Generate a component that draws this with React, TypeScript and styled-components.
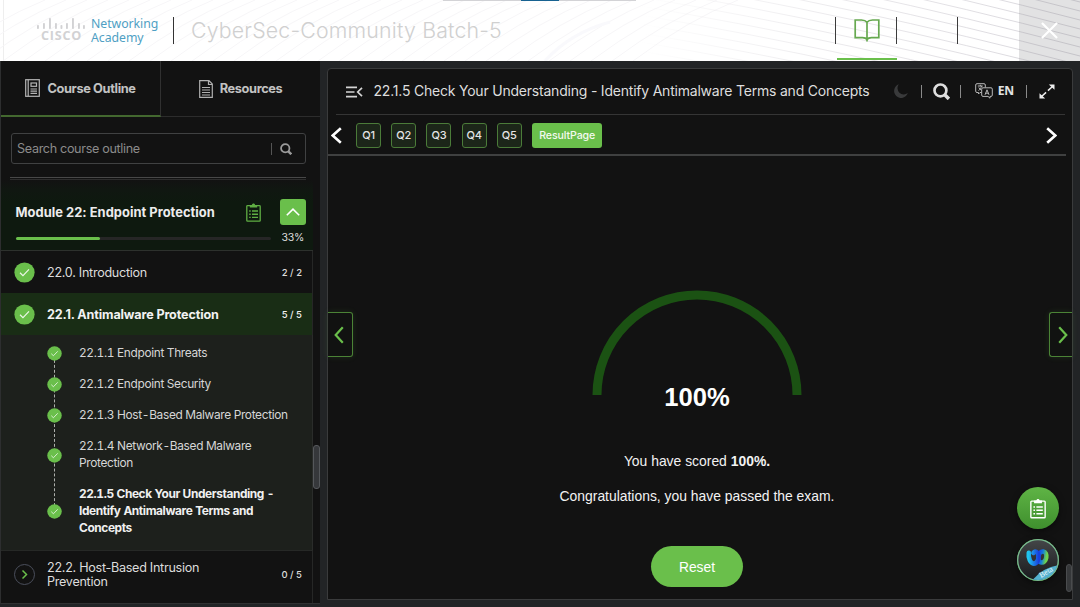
import React from 'react';
import styled, { createGlobalStyle } from 'styled-components';

const Global = createGlobalStyle`
  *, *::before, *::after { box-sizing: border-box; }
  body { margin: 0; background: #222426; overflow: hidden; }
  button { font: inherit; color: inherit; background: none; border: 0; padding: 0; margin: 0; }
  svg { display: block; flex: none; }
`;

const inter = `Inter, "Liberation Sans", sans-serif`;
const arial = `"Liberation Sans", Arial, sans-serif`;
const green = '#6abf4b';

const Page = styled.div`
  width: 1080px;
  height: 607px;
  display: flex;
  flex-direction: column;
  background: #222426;
  color: #e6e6e6;
  font-family: ${inter};
  overflow: hidden;
`;

/* ---------- header ---------- */
const Header = styled.header`
  position: relative;
  height: 61px;
  flex: none;
  display: flex;
  background: #fff;
`;
const Waves = styled.svg`
  position: absolute;
  inset: 0;
`;
const Brand = styled.div`
  position: relative;
  display: flex;
  align-items: center;
  width: 174px;
  height: 27px;
  margin-top: 17px;
  padding-left: 37px;
  border-right: 1px solid #333;
`;
const CiscoMark = styled.div`
  width: 48px;
  margin-right: 6px;
  display: flex;
  flex-direction: column;
`;
const CiscoWord = styled.span`
  font: 700 12.6px/12px "Open Sans", sans-serif;
  letter-spacing: 0.8px;
  color: #d2d2d4;
  padding-left: 4px;
  height: 13px;
`;
const Academy = styled.div`
  font: 400 12.3px/14px "Noto Sans", sans-serif;
  letter-spacing: -0.05px;
  color: #4f9fc4;
  white-space: pre;
`;
const CourseName = styled.h1`
  position: relative;
  margin: 16px 0 0 17px;
  font: 300 21.3px/28px ${inter};
  letter-spacing: 0.19px;
  color: #d0d0d0;
  flex: 1;
  white-space: nowrap;
`;
const HeaderSlot = styled.div<{ $active?: boolean }>`
  position: relative;
  width: 61px;
  display: flex;
  justify-content: center;
  padding-top: 19px;
  &::before {
    content: '';
    position: absolute;
    left: -1px;
    top: 17px;
    width: 1px;
    height: 27px;
    background: #3c3c3c;
  }
  &::after {
    content: '';
    position: absolute;
    left: 1px;
    bottom: 1px;
    width: 60px;
    height: 2px;
    background: ${p => (p.$active ? green : 'transparent')};
  }
`;
const CloseButton = styled.button`
  position: relative;
  width: 61px;
  display: flex;
  align-items: center;
  justify-content: center;
  background: rgba(150, 150, 156, 0.28);
`;
const LoadBar = styled.div`
  position: absolute;
  left: 443px;
  top: 0;
  width: 193px;
  height: 1px;
  background: #d3d3d6;
  &::after {
    content: '';
    display: block;
    margin-left: 78px;
    width: 38px;
    height: 1px;
    background: #176291;
  }
`;

/* ---------- sidebar ---------- */
const Body = styled.div`
  flex: 1;
  display: flex;
  min-height: 0;
`;
const Sidebar = styled.aside`
  position: relative;
  width: 320px;
  height: 543px;
  display: flex;
  flex-direction: column;
  background: #121212;
  border-left: 1px solid #2d2e2f;
  border-bottom: 1px solid #303132;
`;
const Tabs = styled.div`
  display: flex;
  height: 56px;
  flex: none;
`;
const Tab = styled.button<{ $active?: boolean }>`
  width: ${p => (p.$active ? 160 : 159)}px;
  display: flex;
  align-items: center;
  justify-content: center;
  gap: 7px;
  font-size: 12.8px;
  font-weight: 700;
  letter-spacing: -0.37px;
  color: #c2c2c2;
  border-bottom: ${p => (p.$active ? '2px solid #43682f' : '1px solid #2c2c2c')};
  border-right: ${p => (p.$active ? '1px solid #303030' : '0')};
`;
const SearchBox = styled.label`
  margin: 16px 14px 0 10px;
  height: 31px;
  flex: none;
  border: 1px solid #404142;
  border-radius: 3px;
  display: flex;
  align-items: center;
  padding: 0 13px 0 5px;
  font-size: 12.6px;
  letter-spacing: -0.33px;
  color: #8b8b8b;
`;
const SearchHint = styled.span`
  flex: 1;
`;
const SearchRule = styled.i`
  width: 1px;
  height: 12px;
  background: #555;
  margin-right: 8px;
`;
const DoubleRule = styled.div`
  margin: 13px 14px 0 9px;
  height: 3px;
  flex: none;
  border-top: 1px solid #484848;
  border-bottom: 1px solid #2d2d2d;
`;
const ModuleHead = styled.div`
  height: 71px;
  margin-right: 7px;
  flex: none;
  background: linear-gradient(#121212, #101711 10px, #0e190f 22px);
  border-bottom: 1px solid #2d312d;
  padding: 19px 7px 0 15px;
`;
const ModuleTitle = styled.div`
  display: flex;
  align-items: center;
  height: 26px;
  font-size: 12.9px;
  font-weight: 700;
  letter-spacing: 0.03px;
  color: #ececec;
`;
const Grow = styled.span`
  flex: 1;
  margin-left: -0.5px;
  white-space: nowrap;
`;
const Collapse = styled.button`
  width: 26px;
  height: 26px;
  margin-left: 19px;
  border-radius: 3px;
  background: ${green};
  display: flex;
  align-items: center;
  justify-content: center;
`;
const ProgressRow = styled.div`
  display: flex;
  align-items: center;
  height: 25px;
  justify-content: space-between;
  padding-right: 2px;
  font-size: 10.5px;
  letter-spacing: -0.3px;
  color: #dedede;
`;
const Track = styled.div`
  width: 255px;
  height: 3px;
  margin-top: 1px;
  border-radius: 2px;
  background: #262626;
  &::before {
    content: '';
    display: block;
    width: 33%;
    height: 100%;
    border-radius: 2px;
    background: ${green};
  }
`;
const Section = styled.div<{ $active?: boolean; $tall?: boolean }>`
  height: ${p => (p.$tall ? 52 : 42)}px;
  flex: none;
  margin-right: 7px;
  display: flex;
  align-items: center;
  padding: ${p => (p.$tall ? '0 10px 5px 13px' : '1px 10px 0 13px')};
  background: ${p => (p.$active ? '#192d15' : '#121212')};
  border-right: 1px solid #262726;
  font-size: 12.6px;
  line-height: 14px;
  font-weight: ${p => (p.$active ? 700 : 400)};
  letter-spacing: ${p => (p.$active ? -0.14 : -0.28)}px;
  color: ${p => (p.$active ? '#f2f2f2' : '#dcdcdc')};
`;
const SectionName = styled.span`
  flex: 1;
  margin-left: 12px;
  white-space: pre;
`;
const Count = styled.span`
  font-size: 9.5px;
  font-weight: 500;
  letter-spacing: 0;
`;
const Topics = styled.div`
  position: relative;
  height: 216px;
  flex: none;
  margin-right: 7px;
  background: #1d201c;
  border-right: 1px solid #2a2c2a;
  border-bottom: 1px solid #262826;
  padding: 3px 0 0 46px;
  &::before {
    content: '';
    position: absolute;
    left: 53px;
    top: 20px;
    height: 156px;
    border-left: 1px dashed #aeb0ac;
  }
`;
const Topic = styled.div<{ $lines?: number; $active?: boolean }>`
  position: relative;
  display: flex;
  align-items: center;
  height: ${p => 14 + 17 * (p.$lines || 1)}px;
  gap: 17px;
  font-size: 11.9px;
  line-height: 17px;
  font-weight: ${p => (p.$active ? 700 : 400)};
  letter-spacing: ${p => (p.$active ? -0.4 : -0.34)}px;
  font-variant-numeric: tabular-nums;
  color: ${p => (p.$active ? '#f0f0f0' : '#d6d6d6')};
  white-space: pre;
`;
const TopicName = styled.span`
  margin-top: -2px;
`;
const SideThumb = styled.div`
  position: absolute;
  right: 0;
  top: 384px;
  width: 7px;
  height: 44px;
  border-radius: 3px;
  background: #36383b;
  border: 1px solid #55585b;
`;

/* ---------- main panel ---------- */
const Panel = styled.main`
  position: relative;
  width: 746px;
  height: 532px;
  margin: 7px 0 0 7px;
  background: #121212;
  border: 1px solid #3a3b3c;
  border-radius: 4px 4px 0 0;
`;
const TitleRow = styled.div`
  display: flex;
  align-items: center;
  height: 46px;
  margin: 0 7px 0 8px;
  padding-left: 10px;
  padding-right: 10px;
  border-bottom: 1px solid #353535;
`;
const TopicTitle = styled.h2`
  margin: -2px 0 0 10.5px;
  flex: 1;
  font: 400 14px/20px ${inter};
  letter-spacing: -0.21px;
  color: #dedede;
  white-space: nowrap;
`;
const Pipe = styled.i<{ $before?: number; $after: number }>`
  width: 1px;
  height: 13px;
  margin: 0 ${p => p.$after}px 0 ${p => p.$before || 0}px;
  background: #8a8a8a;
`;
const Tools = styled.div`
  display: flex;
  align-items: center;
  margin-top: -1px;
`;
const Lang = styled.span`
  font: 700 12.2px/16px "Open Sans", sans-serif;
  letter-spacing: -0.2px;
  color: #e2e2e2;
  margin: 0 12px 0 5px;
`;
const Questions = styled.div`
  display: flex;
  align-items: center;
  height: 41px;
  margin-right: 6px;
  padding: 1px 9px 0 3px;
  border-bottom: 2px solid #3f4040;
`;
const Pills = styled.div`
  flex: 1;
  display: flex;
  gap: 10.2px;
  margin-left: 14px;
`;
const Question = styled.button`
  width: 25px;
  height: 25px;
  border: 1px solid #4b7b39;
  border-radius: 3px;
  background: #1c2619;
  font: 500 11px/23px ${inter};
  letter-spacing: -0.2px;
  color: #e4e4e4;
`;
const ResultTab = styled.button`
  width: 70.5px;
  height: 25px;
  border-radius: 3px;
  background: ${green};
  font: 500 10.6px/25px ${inter};
  letter-spacing: -0.1px;
  color: #f3faef;
`;
const Result = styled.section`
  display: flex;
  flex-direction: column;
  align-items: center;
  margin-right: 6px;
  padding-top: 134px;
  font-family: ${arial};
  color: #f2f2f2;
`;
const Score = styled.div`
  margin-top: -13px;
  font-weight: 700;
  font-size: 25.6px;
  line-height: 30px;
  color: #fff;
`;
const Lines = styled.div`
  margin-top: 39px;
  text-align: center;
`;
const Line = styled.p`
  margin: 0;
  height: 35px;
  font-size: 13.9px;
  line-height: 20px;
`;
const Reset = styled.button`
  margin-top: 25px;
  width: 92px;
  height: 41px;
  border-radius: 21px;
  background: ${green};
  font: 400 13.8px/43px ${arial};
  color: #fff;
`;
const SideNav = styled.button<{ $side: 'left' | 'right' }>`
  position: absolute;
  top: 243px;
  ${p => p.$side}: 0;
  width: ${p => (p.$side === 'left' ? 25 : 23)}px;
  height: 45px;
  display: flex;
  align-items: center;
  justify-content: center;
  padding-left: ${p => (p.$side === 'left' ? 0 : 3)}px;
  padding-right: ${p => (p.$side === 'left' ? 3 : 0)}px;
  background: #111211;
  border: 1.5px solid #4b8336;
  border-${p => p.$side}: 0;
  border-radius: ${p => (p.$side === 'left' ? '0 3px 3px 0' : '3px 0 0 3px')};
  box-shadow: 0 0 6px rgba(106, 191, 75, 0.14);
`;
const Floating = styled.div`
  position: absolute;
  right: 13px;
  top: 418px;
  display: flex;
  flex-direction: column;
  gap: 10px;
`;
const Fab = styled.button`
  width: 42px;
  height: 42px;
  border-radius: 50%;
  display: flex;
  align-items: center;
  justify-content: center;
  background: linear-gradient(#5fb445, #3f8f2e);
  box-shadow: 0 2px 6px rgba(0, 0, 0, 0.5);
`;
const PanelThumb = styled.div`
  position: absolute;
  right: 0;
  top: 495px;
  width: 6px;
  height: 28px;
  border-radius: 3px;
  background: #36383a;
  border: 1px solid #4a4c4e;
`;

const Check = ({ size }: { size: number }) => (
  <svg width={size} height={size} viewBox="0 0 22 22">
    <circle cx="11" cy="11" r="10.6" fill={green} />
    <path d="M6.3 11.3l3.1 3 6.3-6.5" fill="none" stroke="#eef8ea" strokeWidth="1.2" />
  </svg>
);

const Chevron = ({ w, h, dir, width = 2, color = '#fff' }: { w: number; h: number; dir: 'left' | 'right'; width?: number; color?: string }) => (
  <svg width={w} height={h} viewBox={`0 0 ${w} ${h}`}>
    <path
      d={dir === 'left' ? `M${w - 1.2} 1.2L1.7 ${h / 2}L${w - 1.2} ${h - 1.2}` : `M1.2 1.2L${w - 1.7} ${h / 2}L1.2 ${h - 1.2}`}
      fill="none"
      stroke={color}
      strokeWidth={width}
    />
  </svg>
);

const Clipboard = ({ w, h, color }: { w: number; h: number; color: string }) => (
  <svg width={w} height={h} viewBox="0 0 15 19" fill="none" stroke={color}>
    <rect x="0.8" y="2.6" width="13.4" height="15.6" rx="0.8" strokeWidth="1.3" />
    <path d="M3.8 4.6V2h2.1c.2-2 3-2 3.2 0h2.1v2.6z" fill={color} stroke="none" />
    <path d="M3.2 8h1.5M3.2 11.2h1.5M3.2 14.4h1.5M6 8h6M6 11.2h6M6 14.4h6" strokeWidth="1.4" />
  </svg>
);

const Magnifier = ({ size, color, width }: { size: number; color: string; width: number }) => (
  <svg width={size} height={size} viewBox="0 0 16 16" fill="none" stroke={color}>
    <circle cx="7" cy="7" r="5.6" strokeWidth={width} />
    <path d="M10.8 10.8L15 15" strokeWidth={width + 0.8} />
  </svg>
);

const ciscoBars = [[0, 7, 4], [6, 5, 6], [12, 0, 11], [18, 5, 6], [23.5, 7, 4], [29, 5, 6], [35, 0, 11], [41, 5, 6], [46, 7, 4]];

const topics = [
  { name: '22.1.1 Endpoint Threats' },
  { name: '22.1.2 Endpoint Security' },
  { name: '22.1.3 Host-Based Malware Protection' },
  { name: '22.1.4 Network-Based Malware\nProtection', lines: 2 },
  { name: '22.1.5 Check Your Understanding -\nIdentify Antimalware Terms and\nConcepts', lines: 3, active: true },
];

export default function App() {
  return (
    <Page>
      <Global />
      <Header>
        <Waves width="1080" height="61" fill="none">
          <defs>
            <linearGradient id="fade" gradientUnits="userSpaceOnUse" x1="640" x2="1080" y1="0" y2="0">
              <stop stopColor="#e2e0e4" stopOpacity="0" />
              <stop offset=".45" stopColor="#e2e0e4" stopOpacity="0.7" />
              <stop offset="1" stopColor="#d6d4da" />
            </linearGradient>
          </defs>
          <path d="M3.5 0V61" stroke="#eee" />
          {Array.from({ length: 34 }, (_, i) => (
            <path key={i} d={`M${i * 21 - 60} 61Q${i * 21 - 5} 20 ${i * 21 + 45} 0`} stroke="#f7f6f8" />
          ))}
          {Array.from({ length: 28 }, (_, i) => (
            <path key={i} d={`M640 ${i * 9 - 120}Q850 ${i * 9 - 85} 1080 ${i * 9 - 25}`} stroke="url(#fade)" />
          ))}
          <path d="M545 61Q570 33 610 22" stroke="#f9f9fc" strokeWidth="3" />
        </Waves>
        <LoadBar />
        <Brand>
          <CiscoMark>
            <svg width="48" height="12">
              {ciscoBars.map(([x, y, h]) => (
                <rect key={x} x={x} y={y} width="1.9" height={h} rx="0.8" fill="#d2d2d4" />
              ))}
            </svg>
            <CiscoWord>CISCO</CiscoWord>
          </CiscoMark>
          <Academy>{'Networking\nAcademy'}</Academy>
        </Brand>
        <CourseName>CyberSec-Community Batch-5</CourseName>
        <HeaderSlot $active>
          <svg width="26" height="23" viewBox="0 0 26 23" fill="none" stroke="#67a950" strokeWidth="1.7">
            <path d="M13 3.2C11.4 1.2 9.2 1 7.5 1H1.2v17.6h7.3c2 0 3.6.5 4.5 2 .9-1.5 2.5-2 4.5-2h7.3V1h-6.3C16.8 1 14.6 1.2 13 3.2zV22.5" />
          </svg>
        </HeaderSlot>
        <HeaderSlot />
        <HeaderSlot />
        <CloseButton>
          <svg width="17" height="17" viewBox="0 0 18 18" stroke="#fff" strokeWidth="2.3">
            <path d="M1 1l16 16M17 1L1 17" />
          </svg>
        </CloseButton>
      </Header>

      <Body>
        <Sidebar>
          <Tabs>
            <Tab $active>
              <svg width="15" height="18" viewBox="0 0 15 18" fill="none" stroke="#b5b5b5" strokeWidth="1.2">
                <rect x="0.7" y="0.7" width="13.6" height="16.6" />
                <path d="M3.2 .7v16.6M5.5 10h6.5M5.5 12.2h6.5M5.5 14.4h6.5" />
                <rect x="6" y="4" width="5.5" height="3.3" />
              </svg>
              Course Outline
            </Tab>
            <Tab>
              <svg width="14" height="18" viewBox="0 0 14 18" fill="none" stroke="#b0b0b0" strokeWidth="1.2">
                <path d="M.7.7h9.3l3.3 3.3v13.3H.7zM9.5.7v3.8h3.8M3 7.5h8M3 10h8M3 12.5h8M3 15h8" />
              </svg>
              Resources
            </Tab>
          </Tabs>
          <SearchBox>
            <SearchHint>Search course outline</SearchHint>
            <SearchRule />
            <Magnifier size={12} color="#9a9a9a" width={2.4} />
          </SearchBox>
          <DoubleRule />
          <ModuleHead>
            <ModuleTitle>
              <Grow>Module 22: Endpoint Protection</Grow>
              <Clipboard w={15} h={19} color="#5fae43" />
              <Collapse>
                <svg width="14" height="8" viewBox="0 0 14 8" fill="none" stroke="#fff" strokeWidth="1.6">
                  <path d="M.8 7.2L7 1.2l6.2 6" />
                </svg>
              </Collapse>
            </ModuleTitle>
            <ProgressRow>
              <Track />
              33%
            </ProgressRow>
          </ModuleHead>
          <Section>
            <Check size={21} />
            <SectionName>22.0. Introduction</SectionName>
            <Count>2 / 2</Count>
          </Section>
          <Section $active>
            <Check size={21} />
            <SectionName>22.1. Antimalware Protection</SectionName>
            <Count>5 / 5</Count>
          </Section>
          <Topics>
            {topics.map(t => (
              <Topic key={t.name} $lines={t.lines} $active={t.active}>
                <Check size={15} />
                <TopicName>{t.name}</TopicName>
              </Topic>
            ))}
          </Topics>
          <Section $tall>
            <svg width="21" height="21" viewBox="0 0 21 21" fill="none">
              <circle cx="10.5" cy="10.5" r="10" stroke="#4b4f5c" />
              <path d="M8.5 6.5l4 4-4 4" stroke={green} strokeWidth="1.5" />
            </svg>
            <SectionName>{'22.2. Host-Based Intrusion\nPrevention'}</SectionName>
            <Count>0 / 5</Count>
          </Section>
          <SideThumb />
        </Sidebar>

        <Panel>
          <TitleRow>
            <svg width="17" height="12" viewBox="0 0 17 12" fill="none" stroke="#d4d4d4" strokeWidth="1.7">
              <path d="M0 1.3h11M0 6h8.5M0 10.7h11M16 1.8L11.7 6l4.3 4.2" />
            </svg>
            <TopicTitle>22.1.5 Check Your Understanding - Identify Antimalware Terms and Concepts</TopicTitle>
            <Tools>
              <svg width="14" height="14" viewBox="0 0 14 14">
                <path d="M4.8.3A7 7 0 1 0 13.8 9 6.3 6.3 0 0 1 4.8.3z" fill="#393a3b" />
              </svg>
              <Pipe $before={13} $after={11} />
              <Magnifier size={17} color="#dedede" width={2.5} />
              <Pipe $before={10} $after={14} />
              <svg width="18" height="16" viewBox="0 0 18 16" fill="none" stroke="#b8b8b8" strokeWidth="1">
                <path d="M6.5 9.5H5L3.5 11V9.5H2A1.3 1.3 0 0 1 .7 8.2V2A1.3 1.3 0 0 1 2 .7h7A1.3 1.3 0 0 1 10.3 2v2.5" />
                <path d="M8 4.8h8a1.3 1.3 0 0 1 1.3 1.3v6a1.3 1.3 0 0 1-1.3 1.3h-1v1.8l-2-1.8H8a1.3 1.3 0 0 1-1.3-1.3v-6A1.3 1.3 0 0 1 8 4.8z" />
                <path d="M2.8 3h5M5.3 1.8V3M3.5 7.5c1.5-.8 2.6-2.3 3-4.5M3.8 4.5c.5 1.3 1.3 2 2.5 2.7M10 11.8l2-5 2 5M10.7 10.2h2.6" />
              </svg>
              <Lang>EN</Lang>
              <Pipe $after={12} />
              <svg width="16" height="15" viewBox="0 0 16 15" fill="#eee" stroke="#eee">
                <path d="M2.5 12.5L13.5 2.5" strokeWidth="1.5" strokeDasharray="6.2 2.5" />
                <path d="M9.8.5h5.7v5.2zM.5 9.3v5.2h5.7z" stroke="none" />
              </svg>
            </Tools>
          </TitleRow>
          <Questions>
            <Chevron w={11} h={17} dir="left" width={2.6} />
            <Pills>
              {['Q1', 'Q2', 'Q3', 'Q4', 'Q5'].map(q => (
                <Question key={q}>{q}</Question>
              ))}
              <ResultTab>ResultPage</ResultTab>
            </Pills>
            <Chevron w={11} h={17} dir="right" width={2.6} />
          </Questions>
          <Result>
            <svg width="210" height="105" viewBox="0 0 210 105">
              <path d="M5 105A100 100 0 0 1 205 105" fill="none" stroke="#1b5213" strokeWidth="9" />
            </svg>
            <Score>100%</Score>
            <Lines>
              <Line>You have scored <b>100%.</b></Line>
              <Line>Congratulations, you have passed the exam.</Line>
            </Lines>
            <Reset>Reset</Reset>
          </Result>
          <SideNav $side="left"><Chevron w={10} h={18} dir="left" width={2.2} color={green} /></SideNav>
          <SideNav $side="right"><Chevron w={10} h={18} dir="right" width={2.2} color={green} /></SideNav>
          <Floating>
            <Fab><Clipboard w={16} h={21} color="#fff" /></Fab>
            <Fab>
              <svg width="42" height="42" viewBox="0 0 42 42">
                <defs>
                  <linearGradient id="bg" x2="0" y2="1"><stop stopColor="#444648" /><stop offset="1" stopColor="#191a1d" /></linearGradient>
                  <linearGradient id="wl" x2="1"><stop stopColor="#20c5ef" /><stop offset="1" stopColor="#1740dd" /></linearGradient>
                  <linearGradient id="wr" x2="1"><stop stopColor="#1747e8" /><stop offset=".5" stopColor="#1580d8" /><stop offset="1" stopColor="#6fd34d" /></linearGradient>
                  <clipPath id="disc"><circle cx="21" cy="21" r="20" /></clipPath>
                </defs>
                <circle cx="21" cy="21" r="20.3" fill="url(#bg)" stroke="#79b693" strokeWidth="1.3" />
                <g fill="none" strokeWidth="4.6" strokeLinecap="round">
                  <ellipse cx="25.3" cy="18" rx="4" ry="5.6" stroke="url(#wr)" transform="rotate(10 25.3 18)" />
                  <path d="M11.8 13.8C11 19 13.5 24.6 16.8 24.6c3.3 0 5.2-4.3 4.7-8.5-.5-3.3-3.7-4.7-5-2.2" stroke="url(#wl)" />
                </g>
                <path d="M13 44Q26 27 44 26V44z" fill="#54b2d0" clipPath="url(#disc)" />
                <text x="24" y="39" fill="#e9f7fb" fontFamily="Liberation Serif" fontSize="8" transform="rotate(-30 24 39)">Beta</text>
              </svg>
            </Fab>
          </Floating>
          <PanelThumb />
        </Panel>
      </Body>
    </Page>
  );
}
